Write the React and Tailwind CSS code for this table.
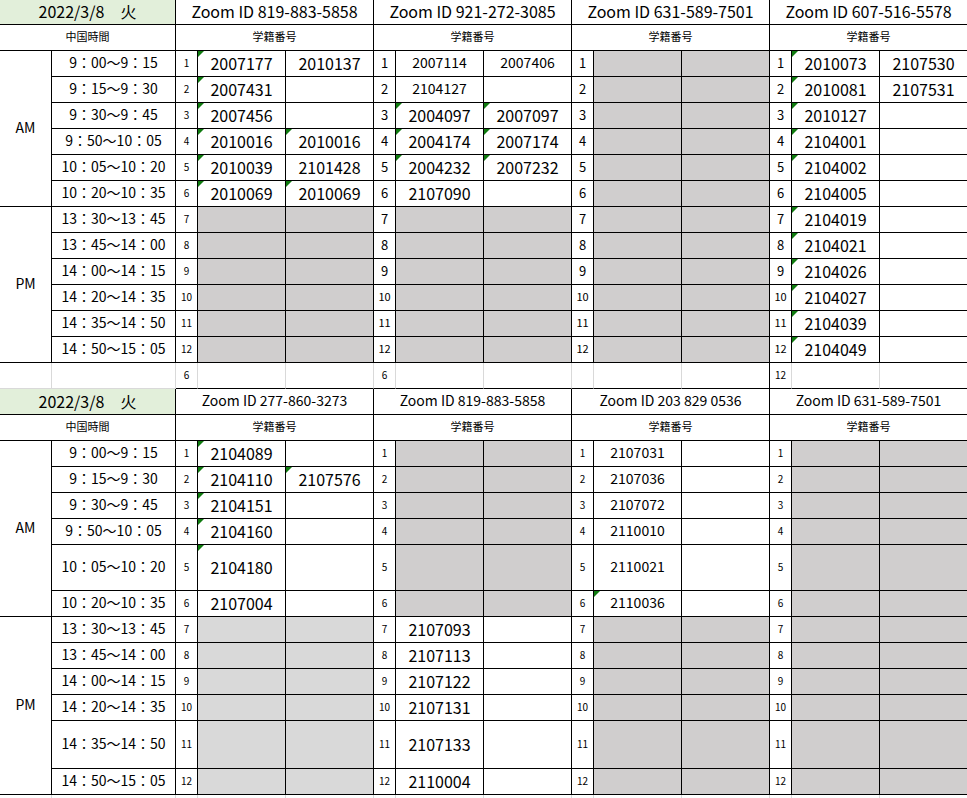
import React from 'react';
import clsx from 'clsx';

// Time slots shared by both sheets
const TIMES = [
    '9：00～9：15', '9：15～9：30', '9：30～9：45', '9：50～10：05', '10：05～10：20', '10：20～10：35',
    '13：30～13：45', '13：45～14：00', '14：00～14：15', '14：20～14：35', '14：35～14：50', '14：50～15：05',
];

// '*' = green error marker, '~' = smaller font, 'g' = grey row, 'l' = light grey row
const TOP = [
    {
        id: 'Zoom ID 819-883-5858', idx: 'sm',
        rows: [['*2007177', '2010137'], ['*2007431', ''], ['*2007456', ''], ['*2010016', '*2010016'], ['*2010039', '2101428'], ['*2010069', '*2010069'], 'g', 'g', 'g', 'g', 'g', 'g'],
    },
    {
        id: 'Zoom ID 921-272-3085', idx: 'lg',
        rows: [['~2007114', '~2007406'], ['~2104127', ''], ['*2004097', '*2007097'], ['*2004174', '*2007174'], ['*2004232', '*2007232'], ['2107090', ''], 'g', 'g', 'g', 'g', 'g', 'g'],
    },
    {
        id: 'Zoom ID 631-589-7501', idx: 'lg',
        rows: ['g', 'g', 'g', 'g', 'g', 'g', 'g', 'g', 'g', 'g', 'g', 'g'],
    },
    {
        id: 'Zoom ID 607-516-5578', idx: 'lg',
        rows: [['*2010073', '2107530'], ['*2010081', '2107531'], ['*2010127', ''], ['*2104001', ''], ['*2104002', ''], ['2104005', ''], ['*2104019', ''], ['*2104021', ''], ['*2104026', ''], ['*2104027', ''], ['*2104039', ''], ['*2104049', '']],
    },
];

const BOTTOM = [
    {
        id: 'Zoom ID 277-860-3273', idx: 'sm',
        rows: [['*2104089', ''], ['*2104110', '*2107576'], ['*2104151', ''], ['*2104160', ''], ['*2104180', ''], ['2107004', ''], 'l', 'l', 'l', 'l', 'l', 'l'],
    },
    {
        id: 'Zoom ID 819-883-5858', idx: 'sm',
        rows: ['g', 'g', 'g', 'g', 'g', 'g', ['2107093', ''], ['2107113', ''], ['2107122', ''], ['2107131', ''], ['2107133', ''], ['2110004', '']],
    },
    {
        id: 'Zoom ID 203 829 0536', idx: 'sm',
        rows: [['~2107031', ''], ['~2107036', ''], ['~2107072', ''], ['~2110010', ''], ['~2110021', ''], ['~*2110036', ''], 'g', 'g', 'g', 'g', 'g', 'g'],
    },
    {
        id: 'Zoom ID 631-589-7501', idx: 'sm',
        rows: ['g', 'g', 'g', 'g', 'g', 'g', 'g', 'g', 'g', 'g', 'g', 'g'],
    },
];

const parse = (s) => ({ text: s.replace(/[*~]/g, ''), tri: s.includes('*'), small: s.includes('~') });

const Cell = ({ className, tri, children }) => (
    <div className={clsx('relative flex items-center justify-center overflow-hidden whitespace-nowrap border-r border-b border-black pb-[2px]', className)}>
        {tri && <span className="absolute left-0 top-0 h-0 w-0 border-t-[6px] border-r-[6px] border-t-[#0f7b0f] border-r-transparent" />}
        {children}
    </div>
);

const GRID = 'grid grid-cols-[52px_124px_22px_88px_88px_22px_88px_88px_22px_88px_88px_22px_88px_88px]';

function SlotRows({ groups }) {
    return TIMES.map((time, i) => (
        <React.Fragment key={time}>
            {i === 0 && <Cell className="row-span-6 text-[14px]">AM</Cell>}
            {i === 6 && <Cell className="row-span-6 text-[14px]">PM</Cell>}
            <Cell className="text-[14px]">{time}</Cell>
            {groups.map((g) => {
                const r = g.rows[i];
                const idxClass = g.idx === 'sm' ? 'text-[10px]' : i < 9 ? 'text-[13px]' : 'text-[11px]';
                return (
                    <React.Fragment key={g.id}>
                        <Cell className={idxClass}>{i + 1}</Cell>
                        {r === 'g' || r === 'l' ? (
                            <>
                                <Cell className={r === 'g' ? 'bg-[#d0cece]' : 'bg-[#d9d9d9]'} />
                                <Cell className={r === 'g' ? 'bg-[#d0cece]' : 'bg-[#d9d9d9]'} />
                            </>
                        ) : (
                            r.map((s, k) => {
                                const c = parse(s);
                                return (
                                    <Cell key={k} tri={c.tri} className={c.small ? 'text-[14px]' : 'text-[16px]'}>
                                        {c.text}
                                    </Cell>
                                );
                            })
                        )}
                    </React.Fragment>
                );
            })}
        </React.Fragment>
    ));
}

function Header({ groups, size }) {
    return (
        <>
            <Cell className="col-span-2 bg-[#e2efda] text-[16px]">2022/3/8　火</Cell>
            {groups.map((g) => (
                <Cell key={g.id} className={clsx('col-span-3', size)}>{g.id}</Cell>
            ))}
            <Cell className="col-span-2 text-[11px]">中国時間</Cell>
            {groups.map((g) => (
                <Cell key={g.id + 'sub'} className="col-span-3 text-[11px]">学籍番号</Cell>
            ))}
        </>
    );
}

export default function App() {
    const spacer = ['6', '', '', '6', '', '', '', '', '', '12', '', ''];
    return (
        <div className="w-[967px] h-[798px] overflow-hidden bg-white text-black font-['Noto_Sans_CJK_JP',sans-serif]">
            {/* first sheet block + blank spacer row */}
            <div className={clsx(GRID, 'grid-rows-[25px_26px_repeat(13,26px)]')}>
                <Header groups={TOP} size="text-[16px]" />
                <SlotRows groups={TOP} />
                <Cell className="border-r-[#d9d9d9] border-b-[#d9d9d9]" />
                <Cell className="border-r-[#d9d9d9] border-b-[#d9d9d9]" />
                {spacer.map((t, k) => (
                    <Cell key={k} className={clsx('text-[10px]', k === 8 ? 'border-r-black' : 'border-r-[#d9d9d9]')}>{t}</Cell>
                ))}
            </div>

            {/* second sheet block */}
            <div className={clsx(GRID, 'grid-rows-[26px_26px_26px_26px_26px_26px_46px_26px_26px_26px_26px_26px_48px_26px_3px]')}>
                <Header groups={BOTTOM} size="text-[14px]" />
                <SlotRows groups={BOTTOM} />
                {Array.from({ length: 14 }).map((_, k) => (
                    <div key={k} className="border-r border-[#d9d9d9]" />
                ))}
            </div>
        </div>
    );
}
